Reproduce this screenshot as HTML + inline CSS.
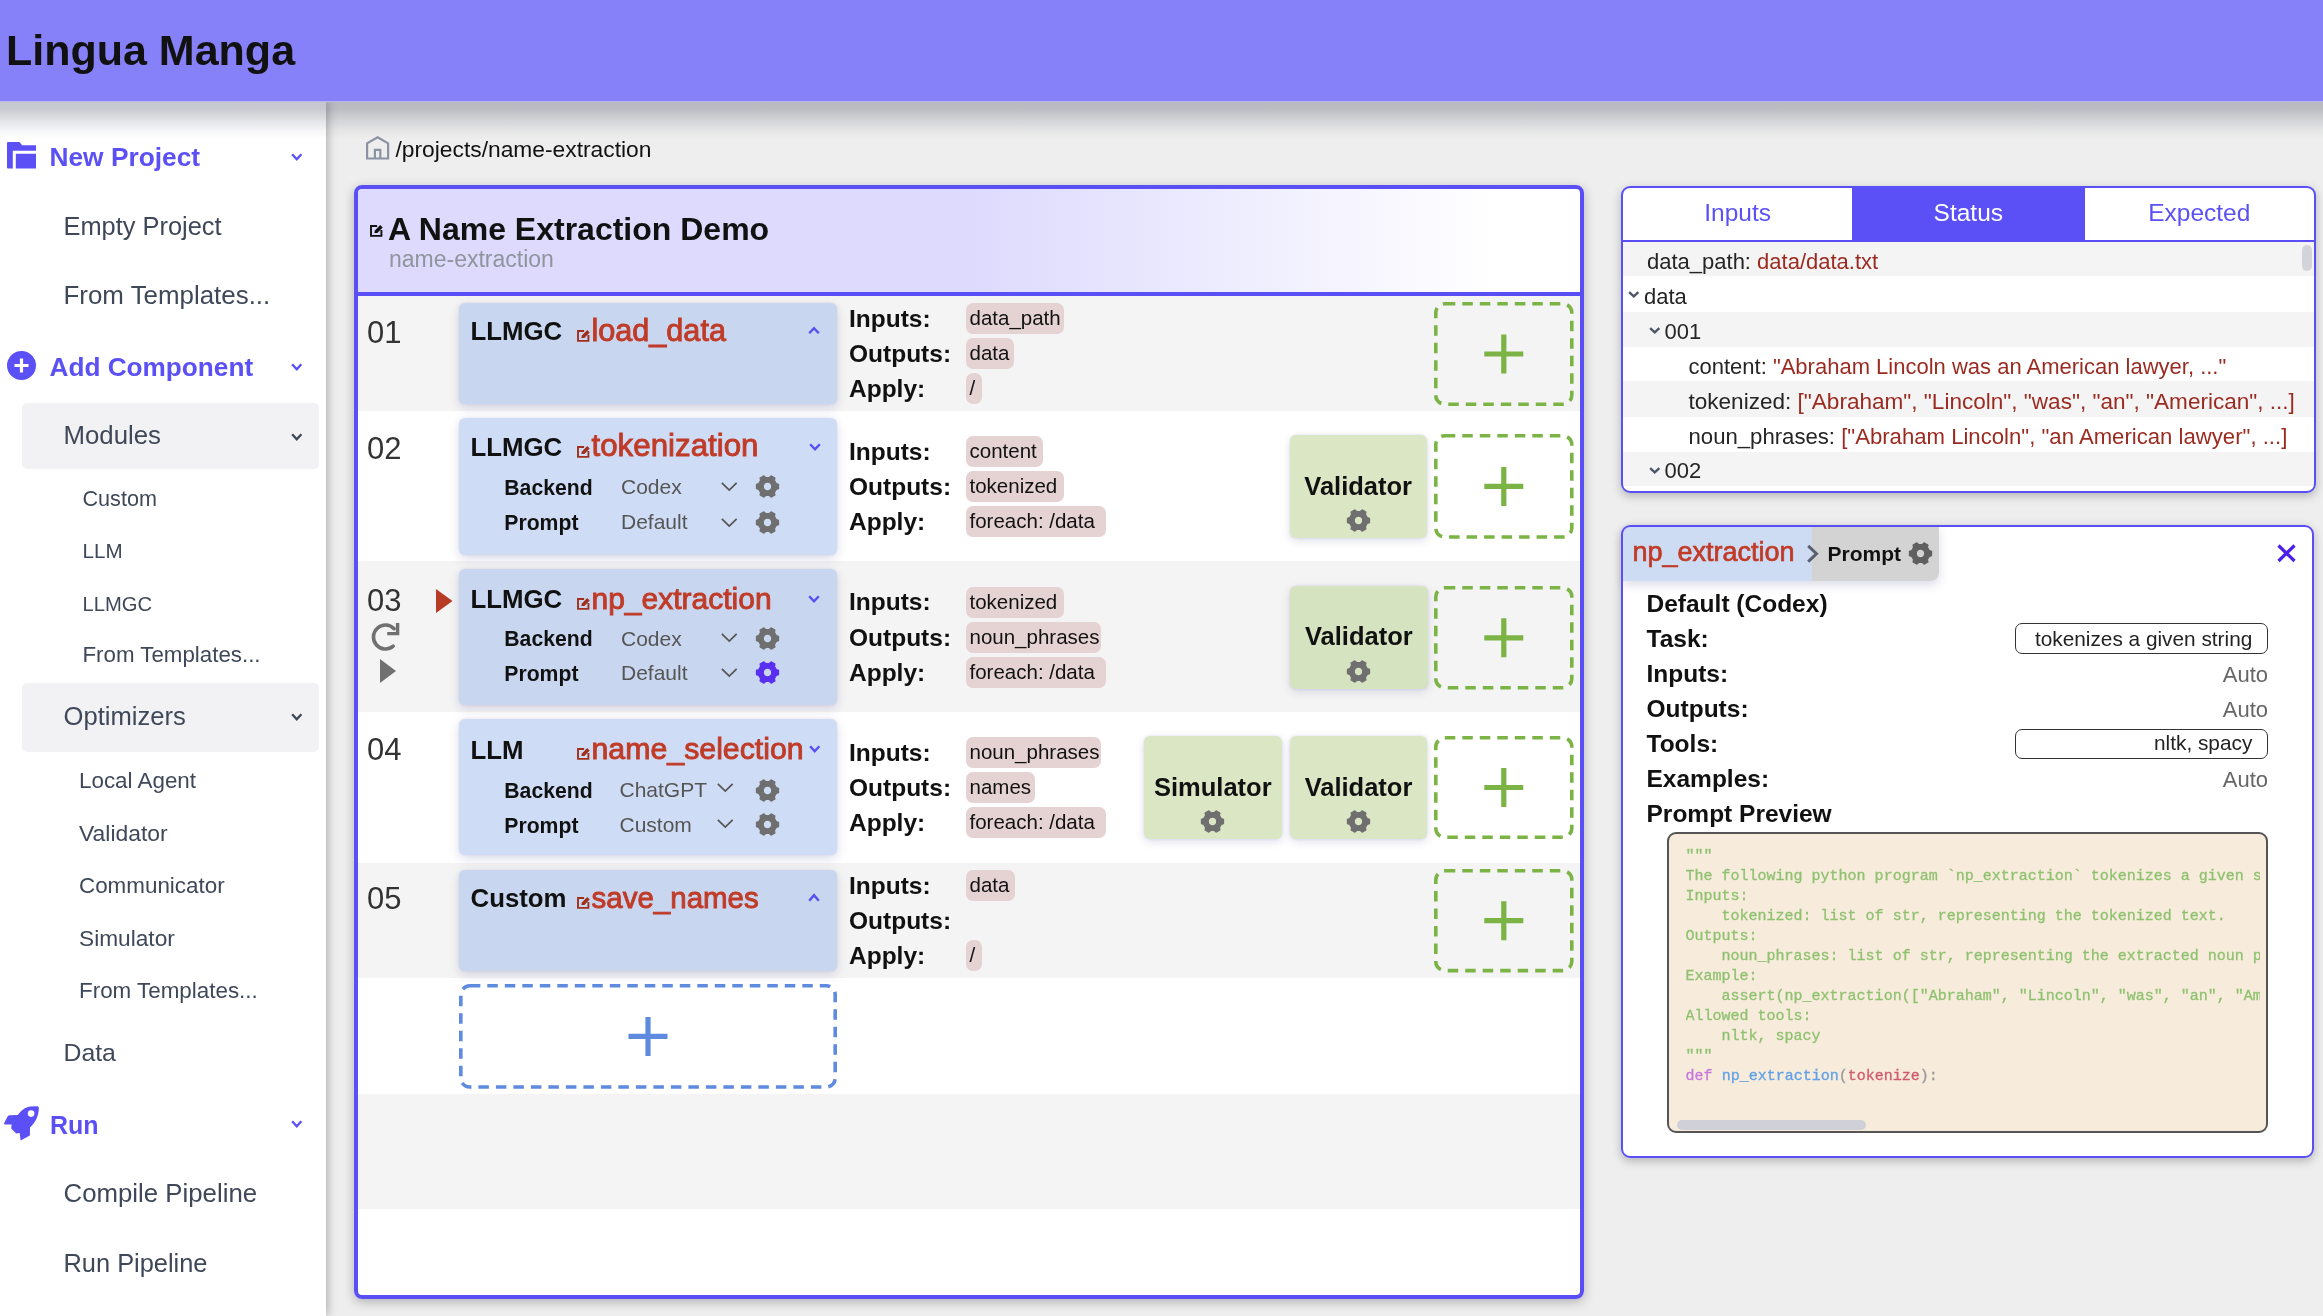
<!DOCTYPE html>
<html><head><meta charset="utf-8">
<style>
*{box-sizing:border-box;margin:0;padding:0}
html,body{width:2323px;height:1316px;overflow:hidden;background:#eeeeee;font-family:"Liberation Sans",sans-serif;color:#111;position:relative}
.a{position:absolute}
.t{position:absolute;white-space:nowrap;line-height:1}
svg.a{overflow:visible}
.m{font-family:"Liberation Mono",monospace;font-size:15px;white-space:pre;-webkit-text-stroke:0.3px currentColor}
</style></head>
<body><div id="root" style="position:absolute;left:0;top:0;width:2323px;height:1316px;overflow:hidden;will-change:transform">
<div class="a" style="left:0;top:0;width:2323px;height:101px;background:#8781f9;z-index:6"></div>
<div class="a" style="left:0;top:101px;width:2323px;height:40px;background:linear-gradient(rgba(25,35,60,0.26) 0px,rgba(25,35,60,0.24) 8px,rgba(25,35,60,0.12) 20px,rgba(25,35,60,0.04) 30px,rgba(25,35,60,0) 38px);z-index:6"></div>
<div class="a" style="left:0;top:101px;width:2323px;height:1px;background:#b9b6f2;z-index:6"></div>
<div class="t" style="left:6px;top:29.1px;font-size:43px;font-weight:bold;color:#111;z-index:7">Lingua Manga</div>
<div class="a" style="left:0;top:101px;width:326px;height:1215px;background:#fff;box-shadow:2px 0 9px rgba(0,0,0,0.26)"></div>
<svg class="a" style="left:7px;top:142.3px;" width="29" height="26.4" viewBox="0 0 29 26.4"><path d="M0,1 Q0,0 1,0 H12.5 L15.2,3.3 H29 V8.8 H5.8 V26.4 H1 Q0,26.4 0,25.4 Z M8.8,11.8 H29 V26.4 H8.8 Z" fill="#5b50f5"/></svg>
<div class="t" style="left:49.5px;top:143.7px;font-size:26.3px;color:#5b50f5;font-weight:bold;">New Project</div>
<svg class="a" style="left:291px;top:152.5px;" width="11.5" height="7.5" viewBox="0 0 11.5 7.5"><path d="M1.15,1.15 L5.75,6.35 L10.35,1.15" fill="none" stroke="#5b50f5" stroke-width="2.3" stroke-linecap="butt" stroke-linejoin="miter"/></svg>
<div class="t" style="left:63.5px;top:213.7px;font-size:25.4px;color:#3f4859;">Empty Project</div>
<div class="t" style="left:63.5px;top:283.1px;font-size:25.9px;color:#3f4859;">From Templates...</div>
<svg class="a" style="left:7px;top:351px;" width="29" height="29" viewBox="0 0 29 29"><circle cx="14.5" cy="14.5" r="14.5" fill="#5b50f5"/><path d="M14.5,7.5 V21.5 M7.5,14.5 H21.5" stroke="#fff" stroke-width="3.2"/></svg>
<div class="t" style="left:49.5px;top:353.8px;font-size:26.2px;color:#5b50f5;font-weight:bold;">Add Component</div>
<svg class="a" style="left:291px;top:362.5px;" width="11.5" height="7.5" viewBox="0 0 11.5 7.5"><path d="M1.15,1.15 L5.75,6.35 L10.35,1.15" fill="none" stroke="#5b50f5" stroke-width="2.3" stroke-linecap="butt" stroke-linejoin="miter"/></svg>
<div class="a" style="left:21.5px;top:403px;width:297px;height:65.5px;background:#f2f2f4;border-radius:5px"></div>
<div class="t" style="left:63.5px;top:423.4px;font-size:25.8px;color:#3f4859;">Modules</div>
<svg class="a" style="left:291px;top:432.5px;" width="11.5" height="7.5" viewBox="0 0 11.5 7.5"><path d="M1.15,1.15 L5.75,6.35 L10.35,1.15" fill="none" stroke="#3f4859" stroke-width="2.3" stroke-linecap="butt" stroke-linejoin="miter"/></svg>
<div class="t" style="left:82.5px;top:487.9px;font-size:21.6px;color:#3f4859;">Custom</div>
<div class="t" style="left:82.5px;top:541.1px;font-size:20.6px;color:#3f4859;">LLM</div>
<div class="t" style="left:82.5px;top:593.8px;font-size:20.2px;color:#3f4859;">LLMGC</div>
<div class="t" style="left:82.5px;top:644.4px;font-size:22.3px;color:#3f4859;">From Templates...</div>
<div class="a" style="left:21.5px;top:682.5px;width:297px;height:69.5px;background:#f2f2f4;border-radius:5px"></div>
<div class="t" style="left:63.5px;top:703.5px;font-size:25.6px;color:#3f4859;">Optimizers</div>
<svg class="a" style="left:291px;top:712.5px;" width="11.5" height="7.5" viewBox="0 0 11.5 7.5"><path d="M1.15,1.15 L5.75,6.35 L10.35,1.15" fill="none" stroke="#3f4859" stroke-width="2.3" stroke-linecap="butt" stroke-linejoin="miter"/></svg>
<div class="t" style="left:79.0px;top:770.0px;font-size:22.4px;color:#3f4859;">Local Agent</div>
<div class="t" style="left:79.0px;top:822.2px;font-size:22.9px;color:#3f4859;">Validator</div>
<div class="t" style="left:79.0px;top:875.1px;font-size:22.4px;color:#3f4859;">Communicator</div>
<div class="t" style="left:79.0px;top:927.4px;font-size:22.7px;color:#3f4859;">Simulator</div>
<div class="t" style="left:79.0px;top:980.2px;font-size:22.4px;color:#3f4859;">From Templates...</div>
<div class="t" style="left:63.5px;top:1040.8px;font-size:24.8px;color:#3f4859;">Data</div>
<svg class="a" style="left:0px;top:1100px;" width="45" height="46" viewBox="0 0 45 46"><path d="M37.8,6.2 Q39.2,6.6 38.8,9 C38.4,17 35,23 30,27.5 L29.9,35.6 L20.6,40.6 L19.7,33 L16.2,33.6 L11.2,28.6 L11.6,24.6 L5,24.6 Q3.4,24.4 4.3,22.8 L7.6,16.5 Q8.3,15.2 10,15.2 L17.8,15 C21,11 24,7.5 30,6.5 Z" fill="#5b50f5"/><circle cx="31.1" cy="13.6" r="3.3" fill="#fff"/></svg>
<div class="t" style="left:50.0px;top:1113.1px;font-size:25px;color:#5b50f5;font-weight:bold;">Run</div>
<svg class="a" style="left:291px;top:1120px;" width="11.5" height="7.5" viewBox="0 0 11.5 7.5"><path d="M1.15,1.15 L5.75,6.35 L10.35,1.15" fill="none" stroke="#5b50f5" stroke-width="2.3" stroke-linecap="butt" stroke-linejoin="miter"/></svg>
<div class="t" style="left:63.5px;top:1180.7px;font-size:25.8px;color:#3f4859;">Compile Pipeline</div>
<div class="t" style="left:63.5px;top:1250.7px;font-size:25.4px;color:#3f4859;">Run Pipeline</div>
<svg class="a" style="left:365px;top:136px;" width="25" height="24" viewBox="0 0 25 24"><path d="M2.1,22.5 V7.4 L12.6,1.3 L23.1,7.4 V22.5 Z M9.9,22.5 V13.8 H15.3 V22.5" fill="none" stroke="#8a93a3" stroke-width="2.2" stroke-linejoin="miter"/></svg>
<div class="t" style="left:395.5px;top:138.3px;font-size:22.8px;color:#111;">/projects/name-extraction</div>
<div class="a" style="left:354px;top:185px;width:1230px;height:1114px;background:#fff;border-radius:8px;box-shadow:0 3px 11px rgba(0,0,0,0.26)"></div>
<div class="a" style="left:358px;top:189px;width:1222px;height:104px;background:linear-gradient(to right,#dddafd 0%,#dddafd 50%,#ffffff 93%);border-radius:5px 5px 0 0"></div>
<div class="a" style="left:358px;top:292px;width:1222px;height:4px;background:#5a4ff5"></div>
<svg class="a" style="left:370.3px;top:225.3px;" width="13" height="13" viewBox="0 0 13 13"><path d="M7.1,0.95 H1 V10.85 H11.4 V4.9" fill="none" stroke="#111" stroke-width="1.9"/><path d="M4.3,7.9 L4.9,5.4 L10.2,0.1 L12.7,2.6 L7.4,7.9 Z" fill="#111"/></svg>
<div class="t" style="left:388.0px;top:212.7px;font-size:32px;color:#111;font-weight:bold;">A Name Extraction Demo</div>
<div class="t" style="left:389.0px;top:248.0px;font-size:23px;color:#8f959c;">name-extraction</div>
<div class="a" style="left:358px;top:296px;width:1222px;height:114.5px;background:#f4f4f4"></div>
<div class="a" style="left:358px;top:410.5px;width:1222px;height:150.5px;background:#fff"></div>
<div class="a" style="left:358px;top:561px;width:1222px;height:150.7px;background:#f4f4f4"></div>
<div class="a" style="left:358px;top:711.7px;width:1222px;height:151.3px;background:#fff"></div>
<div class="a" style="left:358px;top:863px;width:1222px;height:115px;background:#f4f4f4"></div>
<div class="a" style="left:358px;top:978px;width:1222px;height:115.8px;background:#fff"></div>
<div class="a" style="left:358px;top:1093.8px;width:1222px;height:115.2px;background:#f4f4f4"></div>
<div class="a" style="left:358px;top:1209px;width:1222px;height:86px;background:#fff"></div>
<div class="a" style="left:459px;top:303px;width:378px;height:101px;background:#c8d6ef;border-radius:6px;box-shadow:0 0 3px rgba(70,70,160,0.12),0 4px 11px rgba(60,60,150,0.17)"></div>
<div class="t" style="left:367.0px;top:317.0px;font-size:31px;color:#333;">01</div>
<div class="t" style="left:470.5px;top:319.2px;font-size:25.8px;color:#111;font-weight:bold;">LLMGC</div>
<svg class="a" style="left:577px;top:329.7px;" width="13" height="13" viewBox="0 0 13 13"><path d="M7.1,0.95 H1 V10.85 H11.4 V4.9" fill="none" stroke="#a0301c" stroke-width="1.9"/><path d="M4.3,7.9 L4.9,5.4 L10.2,0.1 L12.7,2.6 L7.4,7.9 Z" fill="#a0301c"/></svg>
<div class="t" style="left:591.5px;top:315.1px;font-size:30.6px;color:#c03b27;-webkit-text-stroke:0.9px #c03b27;">load_data</div>
<svg class="a" style="left:808px;top:327px;" width="12" height="7.5" viewBox="0 0 12 7.5"><path d="M1.2,6.3 L6.0,1.2 L10.8,6.3" fill="none" stroke="#5a4ff5" stroke-width="2.4" stroke-linecap="butt" stroke-linejoin="miter"/></svg>
<div class="t" style="left:849.0px;top:306.6px;font-size:24.5px;color:#111;font-weight:bold;">Inputs:</div>
<div class="a" style="left:966.3px;top:302.8px;width:98px;height:31px;background:#e5d2d2;border-radius:7px"></div>
<div class="t" style="left:969.5px;top:307.7px;font-size:20.5px;color:#111;">data_path</div>
<div class="t" style="left:849.0px;top:342.0px;font-size:24.5px;color:#111;font-weight:bold;">Outputs:</div>
<div class="a" style="left:966.3px;top:338.2px;width:47.3px;height:31px;background:#e5d2d2;border-radius:7px"></div>
<div class="t" style="left:969.5px;top:343.1px;font-size:20.5px;color:#111;">data</div>
<div class="t" style="left:849.0px;top:376.8px;font-size:24.5px;color:#111;font-weight:bold;">Apply:</div>
<div class="a" style="left:966.3px;top:373px;width:15.6px;height:31px;background:#e5d2d2;border-radius:7px"></div>
<div class="t" style="left:969.5px;top:377.9px;font-size:20.5px;color:#111;">/</div>
<svg class="a" style="left:1434px;top:302px;" width="139.6" height="104" viewBox="0 0 139.6 104"><rect x="1.8" y="1.8" width="136.0" height="100.4" rx="9" ry="9" fill="none" stroke="#7bb445" stroke-width="3.6" stroke-dasharray="10.5 7"/><path d="M69.8,32.5 V71.5 M50.3,52.0 H89.3" stroke="#7bb445" stroke-width="5.2"/></svg>
<div class="a" style="left:459px;top:418px;width:378px;height:136.5px;background:#cfdcf5;border-radius:6px;box-shadow:0 0 3px rgba(70,70,160,0.12),0 4px 11px rgba(60,60,150,0.17)"></div>
<div class="t" style="left:367.0px;top:432.8px;font-size:31px;color:#333;">02</div>
<div class="t" style="left:470.5px;top:435.0px;font-size:25.8px;color:#111;font-weight:bold;">LLMGC</div>
<svg class="a" style="left:577px;top:445.5px;" width="13" height="13" viewBox="0 0 13 13"><path d="M7.1,0.95 H1 V10.85 H11.4 V4.9" fill="none" stroke="#a0301c" stroke-width="1.9"/><path d="M4.3,7.9 L4.9,5.4 L10.2,0.1 L12.7,2.6 L7.4,7.9 Z" fill="#a0301c"/></svg>
<div class="t" style="left:591.5px;top:430.3px;font-size:31.3px;color:#c03b27;-webkit-text-stroke:0.9px #c03b27;">tokenization</div>
<svg class="a" style="left:808.5px;top:442.7px;" width="12" height="7.5" viewBox="0 0 12 7.5"><path d="M1.2,1.2 L6.0,6.3 L10.8,1.2" fill="none" stroke="#5a4ff5" stroke-width="2.4" stroke-linecap="butt" stroke-linejoin="miter"/></svg>
<div class="t" style="left:504.3px;top:477.1px;font-size:21.2px;color:#111;font-weight:bold;">Backend</div>
<div class="t" style="left:621.0px;top:476.2px;font-size:21px;color:#555;">Codex</div>
<svg class="a" style="left:720.5px;top:482.3px;" width="16.5" height="9" viewBox="0 0 16.5 9"><path d="M0.85,0.85 L8.25,8.15 L15.65,0.85" fill="none" stroke="#555" stroke-width="1.7" stroke-linecap="butt" stroke-linejoin="miter"/></svg>
<svg class="a" style="left:755.5px;top:475.4px;" width="23" height="23" viewBox="0 0 23 23"><path d="M20.22,8.57 L22.55,9.27 L22.55,13.73 L20.22,14.43 L18.40,17.58 L18.95,19.95 L15.09,22.18 L13.32,20.52 L9.68,20.52 L7.91,22.18 L4.05,19.95 L4.60,17.58 L2.78,14.43 L0.45,13.73 L0.45,9.27 L2.78,8.57 L4.60,5.42 L4.05,3.05 L7.91,0.82 L9.68,2.48 L13.32,2.48 L15.09,0.82 L18.95,3.05 L18.40,5.42Z M15.75,11.50 A4.255,4.255 0 1,0 7.25,11.50 A4.255,4.255 0 1,0 15.75,11.50Z" fill="#6f6f6f" fill-rule="evenodd" stroke="#6f6f6f" stroke-width="1.2" stroke-linejoin="round"/></svg>
<div class="t" style="left:504.3px;top:512.3px;font-size:21.2px;color:#111;font-weight:bold;">Prompt</div>
<div class="t" style="left:621.0px;top:511.4px;font-size:21px;color:#555;">Default</div>
<svg class="a" style="left:720.5px;top:517.6px;" width="16.5" height="9" viewBox="0 0 16.5 9"><path d="M0.85,0.85 L8.25,8.15 L15.65,0.85" fill="none" stroke="#555" stroke-width="1.7" stroke-linecap="butt" stroke-linejoin="miter"/></svg>
<svg class="a" style="left:755.5px;top:510.6px;" width="23" height="23" viewBox="0 0 23 23"><path d="M20.22,8.57 L22.55,9.27 L22.55,13.73 L20.22,14.43 L18.40,17.58 L18.95,19.95 L15.09,22.18 L13.32,20.52 L9.68,20.52 L7.91,22.18 L4.05,19.95 L4.60,17.58 L2.78,14.43 L0.45,13.73 L0.45,9.27 L2.78,8.57 L4.60,5.42 L4.05,3.05 L7.91,0.82 L9.68,2.48 L13.32,2.48 L15.09,0.82 L18.95,3.05 L18.40,5.42Z M15.75,11.50 A4.255,4.255 0 1,0 7.25,11.50 A4.255,4.255 0 1,0 15.75,11.50Z" fill="#6f6f6f" fill-rule="evenodd" stroke="#6f6f6f" stroke-width="1.2" stroke-linejoin="round"/></svg>
<div class="t" style="left:849.0px;top:439.8px;font-size:24.5px;color:#111;font-weight:bold;">Inputs:</div>
<div class="a" style="left:966.3px;top:436px;width:76.5px;height:31px;background:#e5d2d2;border-radius:7px"></div>
<div class="t" style="left:969.5px;top:440.9px;font-size:20.5px;color:#111;">content</div>
<div class="t" style="left:849.0px;top:475.0px;font-size:24.5px;color:#111;font-weight:bold;">Outputs:</div>
<div class="a" style="left:966.3px;top:471.2px;width:98px;height:31px;background:#e5d2d2;border-radius:7px"></div>
<div class="t" style="left:969.5px;top:476.1px;font-size:20.5px;color:#111;">tokenized</div>
<div class="t" style="left:849.0px;top:510.1px;font-size:24.5px;color:#111;font-weight:bold;">Apply:</div>
<div class="a" style="left:966.3px;top:506.3px;width:140px;height:31px;background:#e5d2d2;border-radius:7px"></div>
<div class="t" style="left:969.5px;top:511.2px;font-size:20.5px;color:#111;">foreach: /data</div>
<div class="a" style="left:1289.5px;top:434.7px;width:137.5px;height:103px;background:#dbe7c4;border-radius:6px;box-shadow:0 0 3px rgba(80,80,170,0.14),0 3px 8px rgba(70,70,150,0.16)"></div>
<div class="t" style="left:1358.2px;top:473.5px;font-size:25.5px;color:#111;font-weight:bold;transform:translateX(-50%);">Validator</div>
<svg class="a" style="left:1346.75px;top:508.7px;" width="23" height="23" viewBox="0 0 23 23"><path d="M20.22,8.57 L22.55,9.27 L22.55,13.73 L20.22,14.43 L18.40,17.58 L18.95,19.95 L15.09,22.18 L13.32,20.52 L9.68,20.52 L7.91,22.18 L4.05,19.95 L4.60,17.58 L2.78,14.43 L0.45,13.73 L0.45,9.27 L2.78,8.57 L4.60,5.42 L4.05,3.05 L7.91,0.82 L9.68,2.48 L13.32,2.48 L15.09,0.82 L18.95,3.05 L18.40,5.42Z M15.75,11.50 A4.255,4.255 0 1,0 7.25,11.50 A4.255,4.255 0 1,0 15.75,11.50Z" fill="#6f6f6f" fill-rule="evenodd" stroke="#6f6f6f" stroke-width="1.2" stroke-linejoin="round"/></svg>
<svg class="a" style="left:1434px;top:434px;" width="139.6" height="104.8" viewBox="0 0 139.6 104.8"><rect x="1.8" y="1.8" width="136.0" height="101.2" rx="9" ry="9" fill="none" stroke="#7bb445" stroke-width="3.6" stroke-dasharray="10.5 7"/><path d="M69.8,32.9 V71.9 M50.3,52.4 H89.3" stroke="#7bb445" stroke-width="5.2"/></svg>
<div class="a" style="left:459px;top:569px;width:378px;height:135.6px;background:#c8d6ef;border-radius:6px;box-shadow:0 0 3px rgba(70,70,160,0.12),0 4px 11px rgba(60,60,150,0.17)"></div>
<div class="t" style="left:367.0px;top:584.8px;font-size:31px;color:#333;">03</div>
<div class="t" style="left:470.5px;top:587.4px;font-size:25.8px;color:#111;font-weight:bold;">LLMGC</div>
<svg class="a" style="left:577px;top:597.9000000000001px;" width="13" height="13" viewBox="0 0 13 13"><path d="M7.1,0.95 H1 V10.85 H11.4 V4.9" fill="none" stroke="#a0301c" stroke-width="1.9"/><path d="M4.3,7.9 L4.9,5.4 L10.2,0.1 L12.7,2.6 L7.4,7.9 Z" fill="#a0301c"/></svg>
<div class="t" style="left:591.5px;top:583.8px;font-size:30px;color:#c03b27;-webkit-text-stroke:0.9px #c03b27;">np_extraction</div>
<svg class="a" style="left:808px;top:595px;" width="12" height="7.5" viewBox="0 0 12 7.5"><path d="M1.2,1.2 L6.0,6.3 L10.8,1.2" fill="none" stroke="#5a4ff5" stroke-width="2.4" stroke-linecap="butt" stroke-linejoin="miter"/></svg>
<div class="t" style="left:504.3px;top:628.4px;font-size:21.2px;color:#111;font-weight:bold;">Backend</div>
<div class="t" style="left:621.0px;top:627.5px;font-size:21px;color:#555;">Codex</div>
<svg class="a" style="left:720.5px;top:632.5px;" width="16.5" height="9" viewBox="0 0 16.5 9"><path d="M0.85,0.85 L8.25,8.15 L15.65,0.85" fill="none" stroke="#555" stroke-width="1.7" stroke-linecap="butt" stroke-linejoin="miter"/></svg>
<svg class="a" style="left:755.5px;top:627px;" width="23" height="23" viewBox="0 0 23 23"><path d="M20.22,8.57 L22.55,9.27 L22.55,13.73 L20.22,14.43 L18.40,17.58 L18.95,19.95 L15.09,22.18 L13.32,20.52 L9.68,20.52 L7.91,22.18 L4.05,19.95 L4.60,17.58 L2.78,14.43 L0.45,13.73 L0.45,9.27 L2.78,8.57 L4.60,5.42 L4.05,3.05 L7.91,0.82 L9.68,2.48 L13.32,2.48 L15.09,0.82 L18.95,3.05 L18.40,5.42Z M15.75,11.50 A4.255,4.255 0 1,0 7.25,11.50 A4.255,4.255 0 1,0 15.75,11.50Z" fill="#6f6f6f" fill-rule="evenodd" stroke="#6f6f6f" stroke-width="1.2" stroke-linejoin="round"/></svg>
<div class="t" style="left:504.3px;top:663.1px;font-size:21.2px;color:#111;font-weight:bold;">Prompt</div>
<div class="t" style="left:621.0px;top:662.2px;font-size:21px;color:#555;">Default</div>
<svg class="a" style="left:720.5px;top:667.5px;" width="16.5" height="9" viewBox="0 0 16.5 9"><path d="M0.85,0.85 L8.25,8.15 L15.65,0.85" fill="none" stroke="#555" stroke-width="1.7" stroke-linecap="butt" stroke-linejoin="miter"/></svg>
<svg class="a" style="left:755.5px;top:661px;" width="23" height="23" viewBox="0 0 23 23"><path d="M20.22,8.57 L22.55,9.27 L22.55,13.73 L20.22,14.43 L18.40,17.58 L18.95,19.95 L15.09,22.18 L13.32,20.52 L9.68,20.52 L7.91,22.18 L4.05,19.95 L4.60,17.58 L2.78,14.43 L0.45,13.73 L0.45,9.27 L2.78,8.57 L4.60,5.42 L4.05,3.05 L7.91,0.82 L9.68,2.48 L13.32,2.48 L15.09,0.82 L18.95,3.05 L18.40,5.42Z M15.75,11.50 A4.255,4.255 0 1,0 7.25,11.50 A4.255,4.255 0 1,0 15.75,11.50Z" fill="#5a2ff0" fill-rule="evenodd" stroke="#5a2ff0" stroke-width="1.2" stroke-linejoin="round"/></svg>
<div class="t" style="left:849.0px;top:590.4px;font-size:24.5px;color:#111;font-weight:bold;">Inputs:</div>
<div class="a" style="left:966.3px;top:586.6px;width:98px;height:31px;background:#e5d2d2;border-radius:7px"></div>
<div class="t" style="left:969.5px;top:591.5px;font-size:20.5px;color:#111;">tokenized</div>
<div class="t" style="left:849.0px;top:625.5px;font-size:24.5px;color:#111;font-weight:bold;">Outputs:</div>
<div class="a" style="left:966.3px;top:621.7px;width:134.5px;height:31px;background:#e5d2d2;border-radius:7px"></div>
<div class="t" style="left:969.5px;top:626.6px;font-size:20.5px;color:#111;">noun_phrases</div>
<div class="t" style="left:849.0px;top:660.6px;font-size:24.5px;color:#111;font-weight:bold;">Apply:</div>
<div class="a" style="left:966.3px;top:656.8px;width:140px;height:31px;background:#e5d2d2;border-radius:7px"></div>
<div class="t" style="left:969.5px;top:661.7px;font-size:20.5px;color:#111;">foreach: /data</div>
<div class="a" style="left:1290px;top:585.5px;width:137.5px;height:103px;background:#d6e3c0;border-radius:6px;box-shadow:0 0 3px rgba(80,80,170,0.14),0 3px 8px rgba(70,70,150,0.16)"></div>
<div class="t" style="left:1358.8px;top:624.3px;font-size:25.5px;color:#111;font-weight:bold;transform:translateX(-50%);">Validator</div>
<svg class="a" style="left:1347.25px;top:659.5px;" width="23" height="23" viewBox="0 0 23 23"><path d="M20.22,8.57 L22.55,9.27 L22.55,13.73 L20.22,14.43 L18.40,17.58 L18.95,19.95 L15.09,22.18 L13.32,20.52 L9.68,20.52 L7.91,22.18 L4.05,19.95 L4.60,17.58 L2.78,14.43 L0.45,13.73 L0.45,9.27 L2.78,8.57 L4.60,5.42 L4.05,3.05 L7.91,0.82 L9.68,2.48 L13.32,2.48 L15.09,0.82 L18.95,3.05 L18.40,5.42Z M15.75,11.50 A4.255,4.255 0 1,0 7.25,11.50 A4.255,4.255 0 1,0 15.75,11.50Z" fill="#6f6f6f" fill-rule="evenodd" stroke="#6f6f6f" stroke-width="1.2" stroke-linejoin="round"/></svg>
<svg class="a" style="left:1434px;top:585.5px;" width="139.6" height="103.5" viewBox="0 0 139.6 103.5"><rect x="1.8" y="1.8" width="136.0" height="99.9" rx="9" ry="9" fill="none" stroke="#7bb445" stroke-width="3.6" stroke-dasharray="10.5 7"/><path d="M69.8,32.2 V71.2 M50.3,51.8 H89.3" stroke="#7bb445" stroke-width="5.2"/></svg>
<svg class="a" style="left:435.5px;top:588.5px;" width="16.5" height="24" viewBox="0 0 16.5 24"><path d="M0,0 L16.5,12 L0,24 Z" fill="#b83b26"/></svg>
<svg class="a" style="left:365px;top:615px;" width="40" height="40" viewBox="0 0 40 40"><path d="M29.1,13.7 A12,12 0 1,0 28.2,31.2" fill="none" stroke="#707070" stroke-width="3.6" stroke-linecap="round"/><path d="M22.2,18.6 H32.6 V8" fill="none" stroke="#707070" stroke-width="3.4"/></svg>
<svg class="a" style="left:379.5px;top:658.5px;" width="16" height="24" viewBox="0 0 16 24"><path d="M0,0 L16,12 L0,24 Z" fill="#707070"/></svg>
<div class="a" style="left:459px;top:719px;width:378px;height:136.2px;background:#cfdcf5;border-radius:6px;box-shadow:0 0 3px rgba(70,70,160,0.12),0 4px 11px rgba(60,60,150,0.17)"></div>
<div class="t" style="left:367.0px;top:734.4px;font-size:31px;color:#333;">04</div>
<div class="t" style="left:470.5px;top:738.2px;font-size:25.8px;color:#111;font-weight:bold;">LLM</div>
<svg class="a" style="left:577px;top:748.2px;" width="13" height="13" viewBox="0 0 13 13"><path d="M7.1,0.95 H1 V10.85 H11.4 V4.9" fill="none" stroke="#a0301c" stroke-width="1.9"/><path d="M4.3,7.9 L4.9,5.4 L10.2,0.1 L12.7,2.6 L7.4,7.9 Z" fill="#a0301c"/></svg>
<div class="t" style="left:591.5px;top:733.9px;font-size:30.3px;color:#c03b27;-webkit-text-stroke:0.9px #c03b27;">name_selection</div>
<svg class="a" style="left:809px;top:745.3px;" width="11.5" height="7.5" viewBox="0 0 11.5 7.5"><path d="M1.2,1.2 L5.75,6.3 L10.3,1.2" fill="none" stroke="#5a4ff5" stroke-width="2.4" stroke-linecap="butt" stroke-linejoin="miter"/></svg>
<div class="t" style="left:504.3px;top:779.5px;font-size:21.2px;color:#111;font-weight:bold;">Backend</div>
<div class="t" style="left:619.5px;top:778.6px;font-size:21px;color:#555;">ChatGPT</div>
<svg class="a" style="left:716.5px;top:783px;" width="16.5" height="9" viewBox="0 0 16.5 9"><path d="M0.85,0.85 L8.25,8.15 L15.65,0.85" fill="none" stroke="#555" stroke-width="1.7" stroke-linecap="butt" stroke-linejoin="miter"/></svg>
<svg class="a" style="left:755.5px;top:778.5px;" width="23" height="23" viewBox="0 0 23 23"><path d="M20.22,8.57 L22.55,9.27 L22.55,13.73 L20.22,14.43 L18.40,17.58 L18.95,19.95 L15.09,22.18 L13.32,20.52 L9.68,20.52 L7.91,22.18 L4.05,19.95 L4.60,17.58 L2.78,14.43 L0.45,13.73 L0.45,9.27 L2.78,8.57 L4.60,5.42 L4.05,3.05 L7.91,0.82 L9.68,2.48 L13.32,2.48 L15.09,0.82 L18.95,3.05 L18.40,5.42Z M15.75,11.50 A4.255,4.255 0 1,0 7.25,11.50 A4.255,4.255 0 1,0 15.75,11.50Z" fill="#6f6f6f" fill-rule="evenodd" stroke="#6f6f6f" stroke-width="1.2" stroke-linejoin="round"/></svg>
<div class="t" style="left:504.3px;top:814.9px;font-size:21.2px;color:#111;font-weight:bold;">Prompt</div>
<div class="t" style="left:619.5px;top:814.0px;font-size:21px;color:#555;">Custom</div>
<svg class="a" style="left:716.5px;top:818.5px;" width="16.5" height="9" viewBox="0 0 16.5 9"><path d="M0.85,0.85 L8.25,8.15 L15.65,0.85" fill="none" stroke="#555" stroke-width="1.7" stroke-linecap="butt" stroke-linejoin="miter"/></svg>
<svg class="a" style="left:755.5px;top:813.3px;" width="23" height="23" viewBox="0 0 23 23"><path d="M20.22,8.57 L22.55,9.27 L22.55,13.73 L20.22,14.43 L18.40,17.58 L18.95,19.95 L15.09,22.18 L13.32,20.52 L9.68,20.52 L7.91,22.18 L4.05,19.95 L4.60,17.58 L2.78,14.43 L0.45,13.73 L0.45,9.27 L2.78,8.57 L4.60,5.42 L4.05,3.05 L7.91,0.82 L9.68,2.48 L13.32,2.48 L15.09,0.82 L18.95,3.05 L18.40,5.42Z M15.75,11.50 A4.255,4.255 0 1,0 7.25,11.50 A4.255,4.255 0 1,0 15.75,11.50Z" fill="#6f6f6f" fill-rule="evenodd" stroke="#6f6f6f" stroke-width="1.2" stroke-linejoin="round"/></svg>
<div class="t" style="left:849.0px;top:741.0px;font-size:24.5px;color:#111;font-weight:bold;">Inputs:</div>
<div class="a" style="left:966.3px;top:737.2px;width:134.5px;height:31px;background:#e5d2d2;border-radius:7px"></div>
<div class="t" style="left:969.5px;top:742.1px;font-size:20.5px;color:#111;">noun_phrases</div>
<div class="t" style="left:849.0px;top:775.9px;font-size:24.5px;color:#111;font-weight:bold;">Outputs:</div>
<div class="a" style="left:966.3px;top:772.1px;width:68.5px;height:31px;background:#e5d2d2;border-radius:7px"></div>
<div class="t" style="left:969.5px;top:777.0px;font-size:20.5px;color:#111;">names</div>
<div class="t" style="left:849.0px;top:811.2px;font-size:24.5px;color:#111;font-weight:bold;">Apply:</div>
<div class="a" style="left:966.3px;top:807.4px;width:140px;height:31px;background:#e5d2d2;border-radius:7px"></div>
<div class="t" style="left:969.5px;top:812.3px;font-size:20.5px;color:#111;">foreach: /data</div>
<div class="a" style="left:1144px;top:736px;width:137.5px;height:103px;background:#dbe7c4;border-radius:6px;box-shadow:0 0 3px rgba(80,80,170,0.14),0 3px 8px rgba(70,70,150,0.16)"></div>
<div class="t" style="left:1212.8px;top:774.8px;font-size:25.5px;color:#111;font-weight:bold;transform:translateX(-50%);">Simulator</div>
<svg class="a" style="left:1201.25px;top:810px;" width="23" height="23" viewBox="0 0 23 23"><path d="M20.22,8.57 L22.55,9.27 L22.55,13.73 L20.22,14.43 L18.40,17.58 L18.95,19.95 L15.09,22.18 L13.32,20.52 L9.68,20.52 L7.91,22.18 L4.05,19.95 L4.60,17.58 L2.78,14.43 L0.45,13.73 L0.45,9.27 L2.78,8.57 L4.60,5.42 L4.05,3.05 L7.91,0.82 L9.68,2.48 L13.32,2.48 L15.09,0.82 L18.95,3.05 L18.40,5.42Z M15.75,11.50 A4.255,4.255 0 1,0 7.25,11.50 A4.255,4.255 0 1,0 15.75,11.50Z" fill="#6f6f6f" fill-rule="evenodd" stroke="#6f6f6f" stroke-width="1.2" stroke-linejoin="round"/></svg>
<div class="a" style="left:1289.8px;top:736px;width:137.5px;height:103px;background:#dbe7c4;border-radius:6px;box-shadow:0 0 3px rgba(80,80,170,0.14),0 3px 8px rgba(70,70,150,0.16)"></div>
<div class="t" style="left:1358.5px;top:774.8px;font-size:25.5px;color:#111;font-weight:bold;transform:translateX(-50%);">Validator</div>
<svg class="a" style="left:1347.05px;top:810px;" width="23" height="23" viewBox="0 0 23 23"><path d="M20.22,8.57 L22.55,9.27 L22.55,13.73 L20.22,14.43 L18.40,17.58 L18.95,19.95 L15.09,22.18 L13.32,20.52 L9.68,20.52 L7.91,22.18 L4.05,19.95 L4.60,17.58 L2.78,14.43 L0.45,13.73 L0.45,9.27 L2.78,8.57 L4.60,5.42 L4.05,3.05 L7.91,0.82 L9.68,2.48 L13.32,2.48 L15.09,0.82 L18.95,3.05 L18.40,5.42Z M15.75,11.50 A4.255,4.255 0 1,0 7.25,11.50 A4.255,4.255 0 1,0 15.75,11.50Z" fill="#6f6f6f" fill-rule="evenodd" stroke="#6f6f6f" stroke-width="1.2" stroke-linejoin="round"/></svg>
<svg class="a" style="left:1434px;top:736px;" width="139.6" height="103" viewBox="0 0 139.6 103"><rect x="1.8" y="1.8" width="136.0" height="99.4" rx="9" ry="9" fill="none" stroke="#7bb445" stroke-width="3.6" stroke-dasharray="10.5 7"/><path d="M69.8,32.0 V71.0 M50.3,51.5 H89.3" stroke="#7bb445" stroke-width="5.2"/></svg>
<div class="a" style="left:459px;top:870px;width:378px;height:100.6px;background:#c8d6ef;border-radius:6px;box-shadow:0 0 3px rgba(70,70,160,0.12),0 4px 11px rgba(60,60,150,0.17)"></div>
<div class="t" style="left:367.0px;top:882.8px;font-size:31px;color:#333;">05</div>
<div class="t" style="left:470.5px;top:886.2px;font-size:25.8px;color:#111;font-weight:bold;">Custom</div>
<svg class="a" style="left:577px;top:896.7px;" width="13" height="13" viewBox="0 0 13 13"><path d="M7.1,0.95 H1 V10.85 H11.4 V4.9" fill="none" stroke="#a0301c" stroke-width="1.9"/><path d="M4.3,7.9 L4.9,5.4 L10.2,0.1 L12.7,2.6 L7.4,7.9 Z" fill="#a0301c"/></svg>
<div class="t" style="left:591.5px;top:883.0px;font-size:29.5px;color:#c03b27;-webkit-text-stroke:0.9px #c03b27;">save_names</div>
<svg class="a" style="left:808.3px;top:893.7px;" width="12" height="8" viewBox="0 0 12 8"><path d="M1.2,6.8 L6.0,1.2 L10.8,6.8" fill="none" stroke="#5a4ff5" stroke-width="2.4" stroke-linecap="butt" stroke-linejoin="miter"/></svg>
<div class="t" style="left:849.0px;top:874.2px;font-size:24.5px;color:#111;font-weight:bold;">Inputs:</div>
<div class="a" style="left:966.3px;top:870.4px;width:49px;height:31px;background:#e5d2d2;border-radius:7px"></div>
<div class="t" style="left:969.5px;top:875.3px;font-size:20.5px;color:#111;">data</div>
<div class="t" style="left:849.0px;top:909.3px;font-size:24.5px;color:#111;font-weight:bold;">Outputs:</div>
<div class="t" style="left:849.0px;top:944.0px;font-size:24.5px;color:#111;font-weight:bold;">Apply:</div>
<div class="a" style="left:966.3px;top:940.2px;width:15.5px;height:31px;background:#e5d2d2;border-radius:7px"></div>
<div class="t" style="left:969.5px;top:945.1px;font-size:20.5px;color:#111;">/</div>
<svg class="a" style="left:1434px;top:868.6px;" width="139.6" height="103.4" viewBox="0 0 139.6 103.4"><rect x="1.8" y="1.8" width="136.0" height="99.8" rx="9" ry="9" fill="none" stroke="#7bb445" stroke-width="3.6" stroke-dasharray="10.5 7"/><path d="M69.8,32.2 V71.2 M50.3,51.7 H89.3" stroke="#7bb445" stroke-width="5.2"/></svg>
<svg class="a" style="left:459px;top:983.6px;" width="378" height="104.8" viewBox="0 0 378 104.8"><rect x="1.8" y="1.8" width="374.4" height="101.2" rx="9" ry="9" fill="none" stroke="#5e8ae0" stroke-width="3.6" stroke-dasharray="10.5 7"/><path d="M189.0,32.9 V71.9 M169.5,52.4 H208.5" stroke="#5e8ae0" stroke-width="5.2"/></svg>
<div class="a" style="left:354px;top:185px;width:1230px;height:1114px;border:4px solid #5a4ff5;border-radius:8px"></div>
<div class="a" style="left:1621px;top:185.5px;width:694.5px;height:307.5px;background:#fff;border-radius:9px;box-shadow:0 3px 10px rgba(0,0,0,0.25)"></div>
<div class="a" style="left:1852px;top:187.5px;width:233px;height:52.5px;background:#5b50f6"></div>
<div class="t" style="left:1737.7px;top:201.0px;font-size:24.5px;color:#5b50f5;transform:translateX(-50%);">Inputs</div>
<div class="t" style="left:1968.3px;top:201.0px;font-size:24.5px;color:#fff;transform:translateX(-50%);">Status</div>
<div class="t" style="left:2199.3px;top:201.2px;font-size:24.5px;color:#5b50f5;transform:translateX(-50%);">Expected</div>
<div class="a" style="left:1623px;top:239.5px;width:690.5px;height:2px;background:#5a4ff5"></div>
<div class="a" style="left:1623px;top:241.5px;width:690.5px;height:34.8px;background:#f4f4f4"></div>
<div class="a" style="left:1623px;top:276.3px;width:690.5px;height:35.5px;background:#fff"></div>
<div class="a" style="left:1623px;top:311.8px;width:690.5px;height:34.9px;background:#f4f4f4"></div>
<div class="a" style="left:1623px;top:346.7px;width:690.5px;height:34.3px;background:#fff"></div>
<div class="a" style="left:1623px;top:381px;width:690.5px;height:35.7px;background:#f4f4f4"></div>
<div class="a" style="left:1623px;top:416.7px;width:690.5px;height:35.0px;background:#fff"></div>
<div class="a" style="left:1623px;top:451.7px;width:690.5px;height:34.3px;background:#f4f4f4"></div>
<div class="t" style="left:1647.0px;top:251.0px;font-size:22px;color:#252525;">data_path: <span style="color:#9b2b20">data/data.txt</span></div>
<svg class="a" style="left:1628px;top:291px;" width="11.5" height="6.5" viewBox="0 0 11.5 6.5"><path d="M1.15,1.15 L5.75,5.35 L10.35,1.15" fill="none" stroke="#4a5568" stroke-width="2.3" stroke-linecap="butt" stroke-linejoin="miter"/></svg>
<div class="t" style="left:1644.0px;top:285.7px;font-size:22px;color:#252525;">data</div>
<svg class="a" style="left:1649px;top:327.2px;" width="11.5" height="6.5" viewBox="0 0 11.5 6.5"><path d="M1.15,1.15 L5.75,5.35 L10.35,1.15" fill="none" stroke="#4a5568" stroke-width="2.3" stroke-linecap="butt" stroke-linejoin="miter"/></svg>
<div class="t" style="left:1664.5px;top:320.9px;font-size:22px;color:#252525;">001</div>
<div class="t" style="left:1688.5px;top:356.1px;font-size:22px;color:#252525;">content: <span style="color:#9b2b20">"Abraham Lincoln was an American lawyer, ..."</span></div>
<div class="t" style="left:1688.5px;top:390.8px;font-size:22.55px;color:#252525;">tokenized: <span style="color:#9b2b20">["Abraham", "Lincoln", "was", "an", "American", ...]</span></div>
<div class="t" style="left:1688.5px;top:426.2px;font-size:22.15px;color:#252525;">noun_phrases: <span style="color:#9b2b20">["Abraham Lincoln", "an American lawyer", ...]</span></div>
<svg class="a" style="left:1649px;top:467.4px;" width="11.5" height="6.5" viewBox="0 0 11.5 6.5"><path d="M1.15,1.15 L5.75,5.35 L10.35,1.15" fill="none" stroke="#4a5568" stroke-width="2.3" stroke-linecap="butt" stroke-linejoin="miter"/></svg>
<div class="t" style="left:1664.5px;top:460.4px;font-size:22px;color:#252525;">002</div>
<div class="a" style="left:2302px;top:245.3px;width:9.6px;height:25.3px;background:#d3d3da;border-radius:5px"></div>
<div class="a" style="left:1621px;top:185.5px;width:694.5px;height:307.5px;border:2px solid #5a4ff5;border-radius:9px"></div>
<div class="a" style="left:1621px;top:525px;width:693px;height:633px;background:#fff;border-radius:9px;box-shadow:0 3px 10px rgba(0,0,0,0.25)"></div>
<div class="a" style="left:1623px;top:527px;width:316.2px;height:53.5px;border-radius:7px 0 8px 0;box-shadow:0 4px 10px rgba(60,60,120,0.18)"></div>
<div class="a" style="left:1623px;top:527px;width:189px;height:53.5px;background:#cddbf3;border-radius:7px 0 0 0"></div>
<div class="a" style="left:1812px;top:527px;width:127.2px;height:53.5px;background:#d3d3d3;border-radius:0 0 8px 0"></div>
<div class="t" style="left:1632.5px;top:538.8px;font-size:27px;color:#c03b27;-webkit-text-stroke:0.7px #c03b27;">np_extraction</div>
<svg class="a" style="left:1805.5px;top:543.5px;" width="13" height="19.5" viewBox="0 0 13 19.5"><path d="M2.2,1.8 L10.5,9.75 L2.2,17.7" fill="none" stroke="#5a6070" stroke-width="3"/></svg>
<div class="t" style="left:1827.5px;top:543.2px;font-size:21px;color:#111;font-weight:bold;">Prompt</div>
<svg class="a" style="left:1909px;top:542px;" width="23" height="23" viewBox="0 0 23 23"><path d="M20.22,8.57 L22.55,9.27 L22.55,13.73 L20.22,14.43 L18.40,17.58 L18.95,19.95 L15.09,22.18 L13.32,20.52 L9.68,20.52 L7.91,22.18 L4.05,19.95 L4.60,17.58 L2.78,14.43 L0.45,13.73 L0.45,9.27 L2.78,8.57 L4.60,5.42 L4.05,3.05 L7.91,0.82 L9.68,2.48 L13.32,2.48 L15.09,0.82 L18.95,3.05 L18.40,5.42Z M15.75,11.50 A4.255,4.255 0 1,0 7.25,11.50 A4.255,4.255 0 1,0 15.75,11.50Z" fill="#606060" fill-rule="evenodd" stroke="#606060" stroke-width="1.2" stroke-linejoin="round"/></svg>
<svg class="a" style="left:2276.5px;top:544px;" width="19" height="18.5" viewBox="0 0 19 18.5"><path d="M1.5,1.5 L17.5,17 M17.5,1.5 L1.5,17" stroke="#4a1fe8" stroke-width="3.2"/></svg>
<div class="t" style="left:1646.5px;top:592.2px;font-size:24.5px;color:#111;font-weight:bold;">Default (Codex)</div>
<div class="t" style="left:1646.5px;top:627.2px;font-size:24.5px;color:#111;font-weight:bold;">Task:</div>
<div class="t" style="left:1646.5px;top:661.5px;font-size:24.5px;color:#111;font-weight:bold;">Inputs:</div>
<div class="t" style="left:1646.5px;top:697.2px;font-size:24.5px;color:#111;font-weight:bold;">Outputs:</div>
<div class="t" style="left:1646.5px;top:732.3px;font-size:24.5px;color:#111;font-weight:bold;">Tools:</div>
<div class="t" style="left:1646.5px;top:766.9px;font-size:24.5px;color:#111;font-weight:bold;">Examples:</div>
<div class="t" style="left:1646.5px;top:801.7px;font-size:24.5px;color:#111;font-weight:bold;">Prompt Preview</div>
<div class="a" style="left:2015px;top:623.2px;width:253px;height:31px;border:1.8px solid #333;border-radius:7px"></div>
<div class="t" style="left:2252.3px;top:628.5px;font-size:20.8px;color:#222;transform:translateX(-100%);">tokenizes a given string</div>
<div class="a" style="left:2015px;top:728.8px;width:253px;height:30px;border:1.8px solid #333;border-radius:7px"></div>
<div class="t" style="left:2252.3px;top:733.4px;font-size:20.8px;color:#222;transform:translateX(-100%);">nltk, spacy</div>
<div class="t" style="left:2268.0px;top:664.1px;font-size:22px;color:#666;transform:translateX(-100%);">Auto</div>
<div class="t" style="left:2268.0px;top:698.9px;font-size:22px;color:#666;transform:translateX(-100%);">Auto</div>
<div class="t" style="left:2268.0px;top:768.9px;font-size:22px;color:#666;transform:translateX(-100%);">Auto</div>
<div class="a" style="left:1667px;top:831.8px;width:601px;height:301.5px;background:#f7ecdc;border:2px solid #555;border-radius:9px;overflow:hidden"></div>
<div class="a" style="left:1685.6px;top:831.8px;width:574.5px;height:290px;overflow:hidden;padding-top:2px"><div class="t m" style="left:0;top:17.2px;color:#8fc170">"""</div><div class="t m" style="left:0;top:37.2px;color:#8fc170">The following python program `np_extraction` tokenizes a given string</div><div class="t m" style="left:0;top:57.2px;color:#8fc170">Inputs:</div><div class="t m" style="left:0;top:77.2px;color:#8fc170">    tokenized: list of str, representing the tokenized text.</div><div class="t m" style="left:0;top:97.2px;color:#8fc170">Outputs:</div><div class="t m" style="left:0;top:117.2px;color:#8fc170">    noun_phrases: list of str, representing the extracted noun phrases</div><div class="t m" style="left:0;top:137.2px;color:#8fc170">Example:</div><div class="t m" style="left:0;top:157.2px;color:#8fc170">    assert(np_extraction(["Abraham", "Lincoln", "was", "an", "American"]) == ...</div><div class="t m" style="left:0;top:177.2px;color:#8fc170">Allowed tools:</div><div class="t m" style="left:0;top:197.2px;color:#8fc170">    nltk, spacy</div><div class="t m" style="left:0;top:217.2px;color:#8fc170">"""</div><div class="t m" style="left:0;top:237.2px;color:#999"><span style="color:#c678dd">def</span> <span style="color:#61a0e6">np_extraction</span>(<span style="color:#d05a6b">tokenize</span>):</div></div>
<div class="a" style="left:1676.8px;top:1120px;width:189px;height:10.2px;background:#d0d0d8;border-radius:5px"></div>
<div class="a" style="left:1621px;top:525px;width:693px;height:633px;border:2.5px solid #5a4ff5;border-radius:9px"></div>
</div></body></html>
